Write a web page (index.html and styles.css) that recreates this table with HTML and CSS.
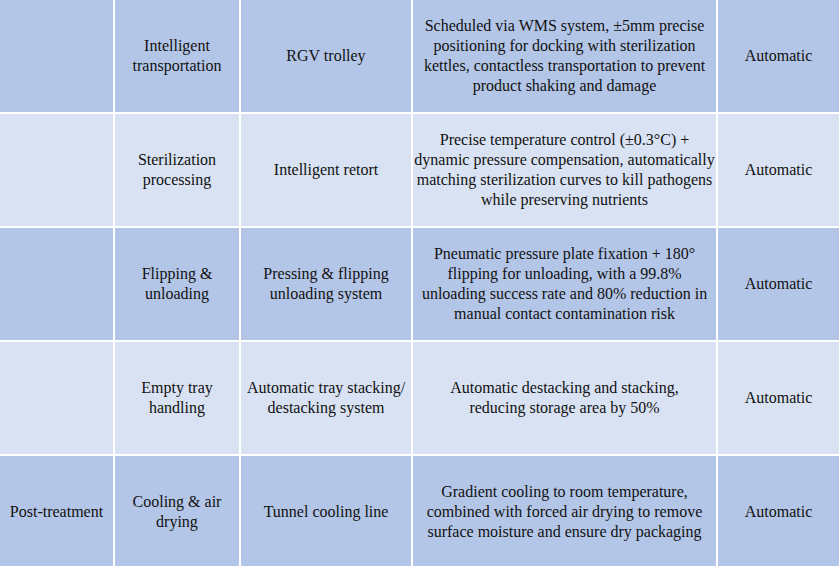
FILE: index.html
```html
<!DOCTYPE html>
<html>
<head>
<meta charset="utf-8">
<link rel="stylesheet" href="styles.css">
</head>
<body>
<div class="table">
  <div class="cell dark"></div>
  <div class="cell dark">Intelligent<br>transportation</div>
  <div class="cell dark">RGV trolley</div>
  <div class="cell dark">Scheduled via WMS system, ±5mm precise<br>positioning for docking with sterilization<br>kettles, contactless transportation to prevent<br>product shaking and damage</div>
  <div class="cell dark">Automatic</div>

  <div class="cell light"></div>
  <div class="cell light">Sterilization<br>processing</div>
  <div class="cell light">Intelligent retort</div>
  <div class="cell light">Precise temperature control (±0.3°C) +<br>dynamic pressure compensation, automatically<br>matching sterilization curves to kill pathogens<br>while preserving nutrients</div>
  <div class="cell light">Automatic</div>

  <div class="cell dark"></div>
  <div class="cell dark">Flipping &amp;<br>unloading</div>
  <div class="cell dark">Pressing &amp; flipping<br>unloading system</div>
  <div class="cell dark">Pneumatic pressure plate fixation + 180°<br>flipping for unloading, with a 99.8%<br>unloading success rate and 80% reduction in<br>manual contact contamination risk</div>
  <div class="cell dark">Automatic</div>

  <div class="cell light"></div>
  <div class="cell light">Empty tray<br>handling</div>
  <div class="cell light">Automatic tray stacking/<br>destacking system</div>
  <div class="cell light">Automatic destacking and stacking,<br>reducing storage area by 50%</div>
  <div class="cell light">Automatic</div>

  <div class="cell dark">Post-treatment</div>
  <div class="cell dark">Cooling &amp; air<br>drying</div>
  <div class="cell dark">Tunnel cooling line</div>
  <div class="cell dark">Gradient cooling to room temperature,<br>combined with forced air drying to remove<br>surface moisture and ensure dry packaging</div>
  <div class="cell dark">Automatic</div>
</div>
</body>
</html>
```
FILE: styles.css
```css
html, body {
  margin: 0;
  padding: 0;
  background: #ffffff;
}
body {
  width: 839px;
  height: 566px;
  overflow: hidden;
}
.table {
  display: grid;
  grid-template-columns: 113px 124px 170px 303px 121px;
  grid-auto-rows: 112px;
  gap: 2px;
  background: #ffffff;
  font-family: "Liberation Serif", "Times New Roman", serif;
  font-size: 16px;
  line-height: 20px;
  color: #111111;
}
.cell {
  display: flex;
  align-items: center;
  justify-content: center;
  text-align: center;
  padding: 0 2px;
  white-space: nowrap;
}
.dark {
  background: #b4c6e7;
}
.light {
  background: #d9e2f3;
}
```
